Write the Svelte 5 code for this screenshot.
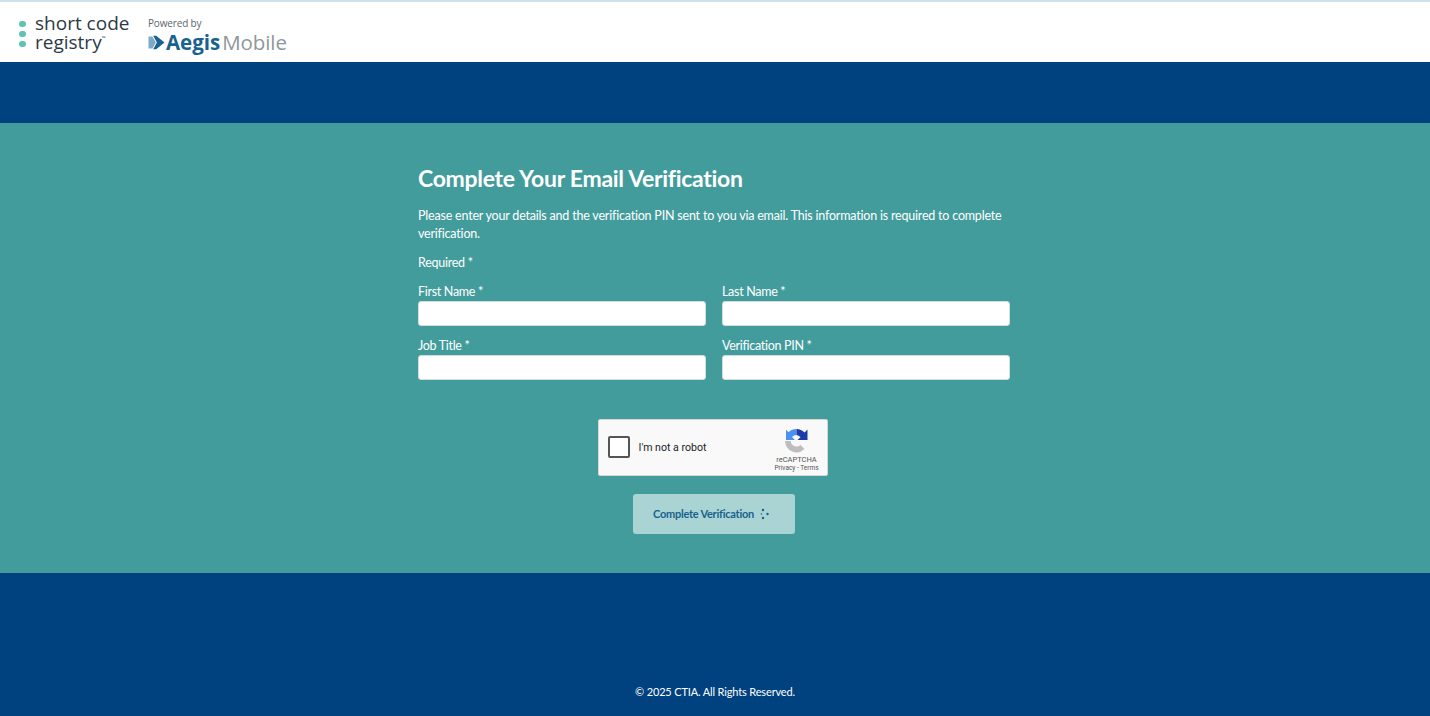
<script lang="ts">
  let firstName = $state("");
  let lastName = $state("");
  let jobTitle = $state("");
  let pin = $state("");
  let robot = $state(false);
</script>

<div class="page">
  <header class="topbar">
    <div class="logo-scr">
      <div class="dots"><span></span><span></span><span></span></div>
      <div class="scr-text">short code<br />registry<sup>™</sup></div>
    </div>
    <div class="logo-aegis">
      <div class="powered">Powered by</div>
      <div class="aegis-row">
        <svg width="17" height="15" viewBox="0 0 17 15">
          <path d="M0.5 1.5h4l3.3 6-3.3 6h-4z" fill="#7fa9c9" />
          <path d="M5.2 0.8h3l8.3 6.7-8.3 6.7h-3l3.7-6.7z" fill="#17628f" />
        </svg>
        <span class="aegis">Aegis</span><span class="mobile">Mobile</span>
      </div>
    </div>
  </header>

  <div class="band-top"></div>

  <main class="content">
    <form class="card" onsubmit={(e) => e.preventDefault()}>
      <h1>Complete Your Email Verification</h1>
      <p class="intro">
        Please enter your details and the verification PIN sent to you via email. This information is required to complete verification.
      </p>
      <p class="required">Required *</p>

      <div class="fields">
        <label>
          <span>First Name *</span>
          <input type="text" bind:value={firstName} />
        </label>
        <label>
          <span>Last Name *</span>
          <input type="text" bind:value={lastName} />
        </label>
        <label>
          <span>Job Title *</span>
          <input type="text" bind:value={jobTitle} />
        </label>
        <label>
          <span>Verification PIN *</span>
          <input type="text" bind:value={pin} />
        </label>
      </div>

      <div class="captcha">
        <button type="button" class="check" class:on={robot} aria-label="I'm not a robot" onclick={() => (robot = !robot)}></button>
        <span class="robot">I'm not a robot</span>
        <div class="badge">
          <svg width="25" height="25" viewBox="0 0 25 25">
            <path d="M12.5 1A11.5 11.5 0 0 0 4.5 4.2L2 1.8V12h9L8 9a6 6 0 0 1 4.5-2z" fill="#4a90f2" />
            <path d="M12.5 1a11.5 11.5 0 0 1 8 3.5l3-3V12h-10l3-2.8A6 6 0 0 0 12.5 7z" fill="#1c3aa9" />
            <path d="M1 13h5.8a5.8 5.8 0 0 0 9.7 4l4 4A11.5 11.5 0 0 1 1 13z" fill="#bdbdbd" />
          </svg>
          <div class="brand">reCAPTCHA</div>
          <div class="links">Privacy - Terms</div>
        </div>
      </div>

      <button type="submit" class="submit" disabled>
        Complete Verification
        <svg width="9" height="12" viewBox="0 0 9 12">
          <circle cx="3" cy="2" r="1.2" />
          <circle cx="1.4" cy="6" r="0.8" />
          <circle cx="3" cy="10" r="1.2" />
          <circle cx="7.5" cy="6" r="1.2" />
        </svg>
      </button>
    </form>
  </main>

  <footer class="footer">© 2025 CTIA. All Rights Reserved.</footer>
</div>

<style>
  :global(body) {
    margin: 0;
    font-family: "Lato", "Liberation Sans", sans-serif;
  }

  .page {
    height: 716px;
    display: flex;
    flex-direction: column;
    overflow: hidden;
  }

  .topbar {
    height: 60px;
    border-top: 2px solid #c9e3ea;
    background: #fff;
    display: flex;
    align-items: flex-start;
    padding-left: 19px;
    gap: 18.5px;
  }

  .logo-scr {
    display: flex;
    align-items: center;
    gap: 9.5px;
    padding-top: 12px;
  }

  .dots {
    display: flex;
    flex-direction: column;
    gap: 3.5px;
    padding-top: 2px;
  }
  .dots span {
    width: 6.5px;
    height: 6.5px;
    border-radius: 50%;
    background: #5cc4b0;
  }

  .scr-text {
    font-family: "Open Sans", sans-serif;
    font-size: 19px;
    line-height: 19px;
    color: #2c3a46;
  }
  .scr-text sup {
    font-size: 5px;
    vertical-align: 9px;
    line-height: 0;
  }

  .logo-aegis {
    padding-top: 15px;
  }

  .powered {
    font-family: "Open Sans", sans-serif;
    font-size: 10px;
    letter-spacing: -0.15px;
    line-height: 13px;
    color: #5a6670;
  }

  .aegis-row {
    display: flex;
    align-items: center;
    gap: 1px;
    height: 24px;
    font-family: "Open Sans", sans-serif;
    font-size: 20.5px;
  }
  .aegis {
    font-weight: 700;
    color: #17628f;
  }
  .mobile {
    color: #8f979c;
    font-weight: 400;
    letter-spacing: -0.1px;
    margin-left: 1px;
  }

  .band-top {
    height: 61px;
    background: #004280;
  }

  .content {
    height: 450px;
    background: #439c9c;
    display: flex;
    justify-content: center;
  }

  .card {
    width: 592px;
    margin-right: 2px;
    padding-top: 41px;
    color: #fff;
    display: flex;
    flex-direction: column;
    align-items: center;
  }

  h1 {
    align-self: stretch;
    margin: 0;
    font-size: 23px;
    letter-spacing: -0.3px;
    line-height: 29px;
    font-weight: 700;
  }

  .intro {
    align-self: stretch;
    margin: 14px 0 0;
    font-size: 12.5px;
    letter-spacing: -0.2px;
    line-height: 18px;
  }

  .required {
    align-self: stretch;
    margin: 9.5px 0 0;
    font-size: 12.5px;
    letter-spacing: -0.27px;
    line-height: 19px;
  }

  .fields {
    align-self: stretch;
    display: grid;
    grid-template-columns: 288px 288px;
    column-gap: 16px;
    row-gap: 10px;
    margin-top: 10px;
  }

  label {
    display: flex;
    flex-direction: column;
    font-size: 12.5px;
    letter-spacing: -0.3px;
    line-height: 19px;
  }

  input {
    height: 25px;
    box-sizing: border-box;
    border: 1px solid #cfdede;
    border-radius: 3px;
    background: #fff;
    padding: 0 8px;
    font: inherit;
  }

  .captcha {
    margin-top: 39px;
    margin-right: 3px;
    margin-bottom: 1px;
    width: 230px;
    height: 57px;
    box-sizing: border-box;
    background: #f9f9f9;
    border: 1px solid #d6d6d6;
    border-radius: 2px;
    display: flex;
    align-items: center;
    padding-left: 9px;
    font-family: "Roboto", sans-serif;
    color: #222;
  }

  .check {
    width: 22px;
    height: 22px;
    padding: 0;
    box-sizing: border-box;
    background: #fff;
    border: 2px solid #555;
    border-radius: 2px;
    cursor: pointer;
  }

  .robot {
    font-size: 10.6px;
    margin-left: 9px;
    flex: 1;
  }

  .badge {
    width: 60px;
    margin-top: 6px;
    display: flex;
    flex-direction: column;
    align-items: center;
    color: #555;
  }
  .brand {
    font-size: 7.5px;
    line-height: 9px;
    margin-top: 2px;
  }
  .links {
    font-size: 6.5px;
    line-height: 9px;
    margin-top: 0;
  }

  .submit {
    margin-top: 17px;
    width: 162px;
    height: 40px;
    padding: 0 6px 0 0;
    border: none;
    border-radius: 3px;
    background: #aad4d4;
    color: #17628f;
    font-family: inherit;
    font-size: 11px;
    letter-spacing: -0.25px;
    font-weight: 700;
    display: flex;
    align-items: center;
    justify-content: center;
    gap: 6px;
  }
  .submit svg {
    fill: #17628f;
  }

  .footer {
    flex: 1;
    background: #004280;
    color: #fff;
    font-size: 11px;
    letter-spacing: -0.15px;
    display: flex;
    align-items: flex-end;
    justify-content: center;
    padding-bottom: 18px;
  }
</style>
